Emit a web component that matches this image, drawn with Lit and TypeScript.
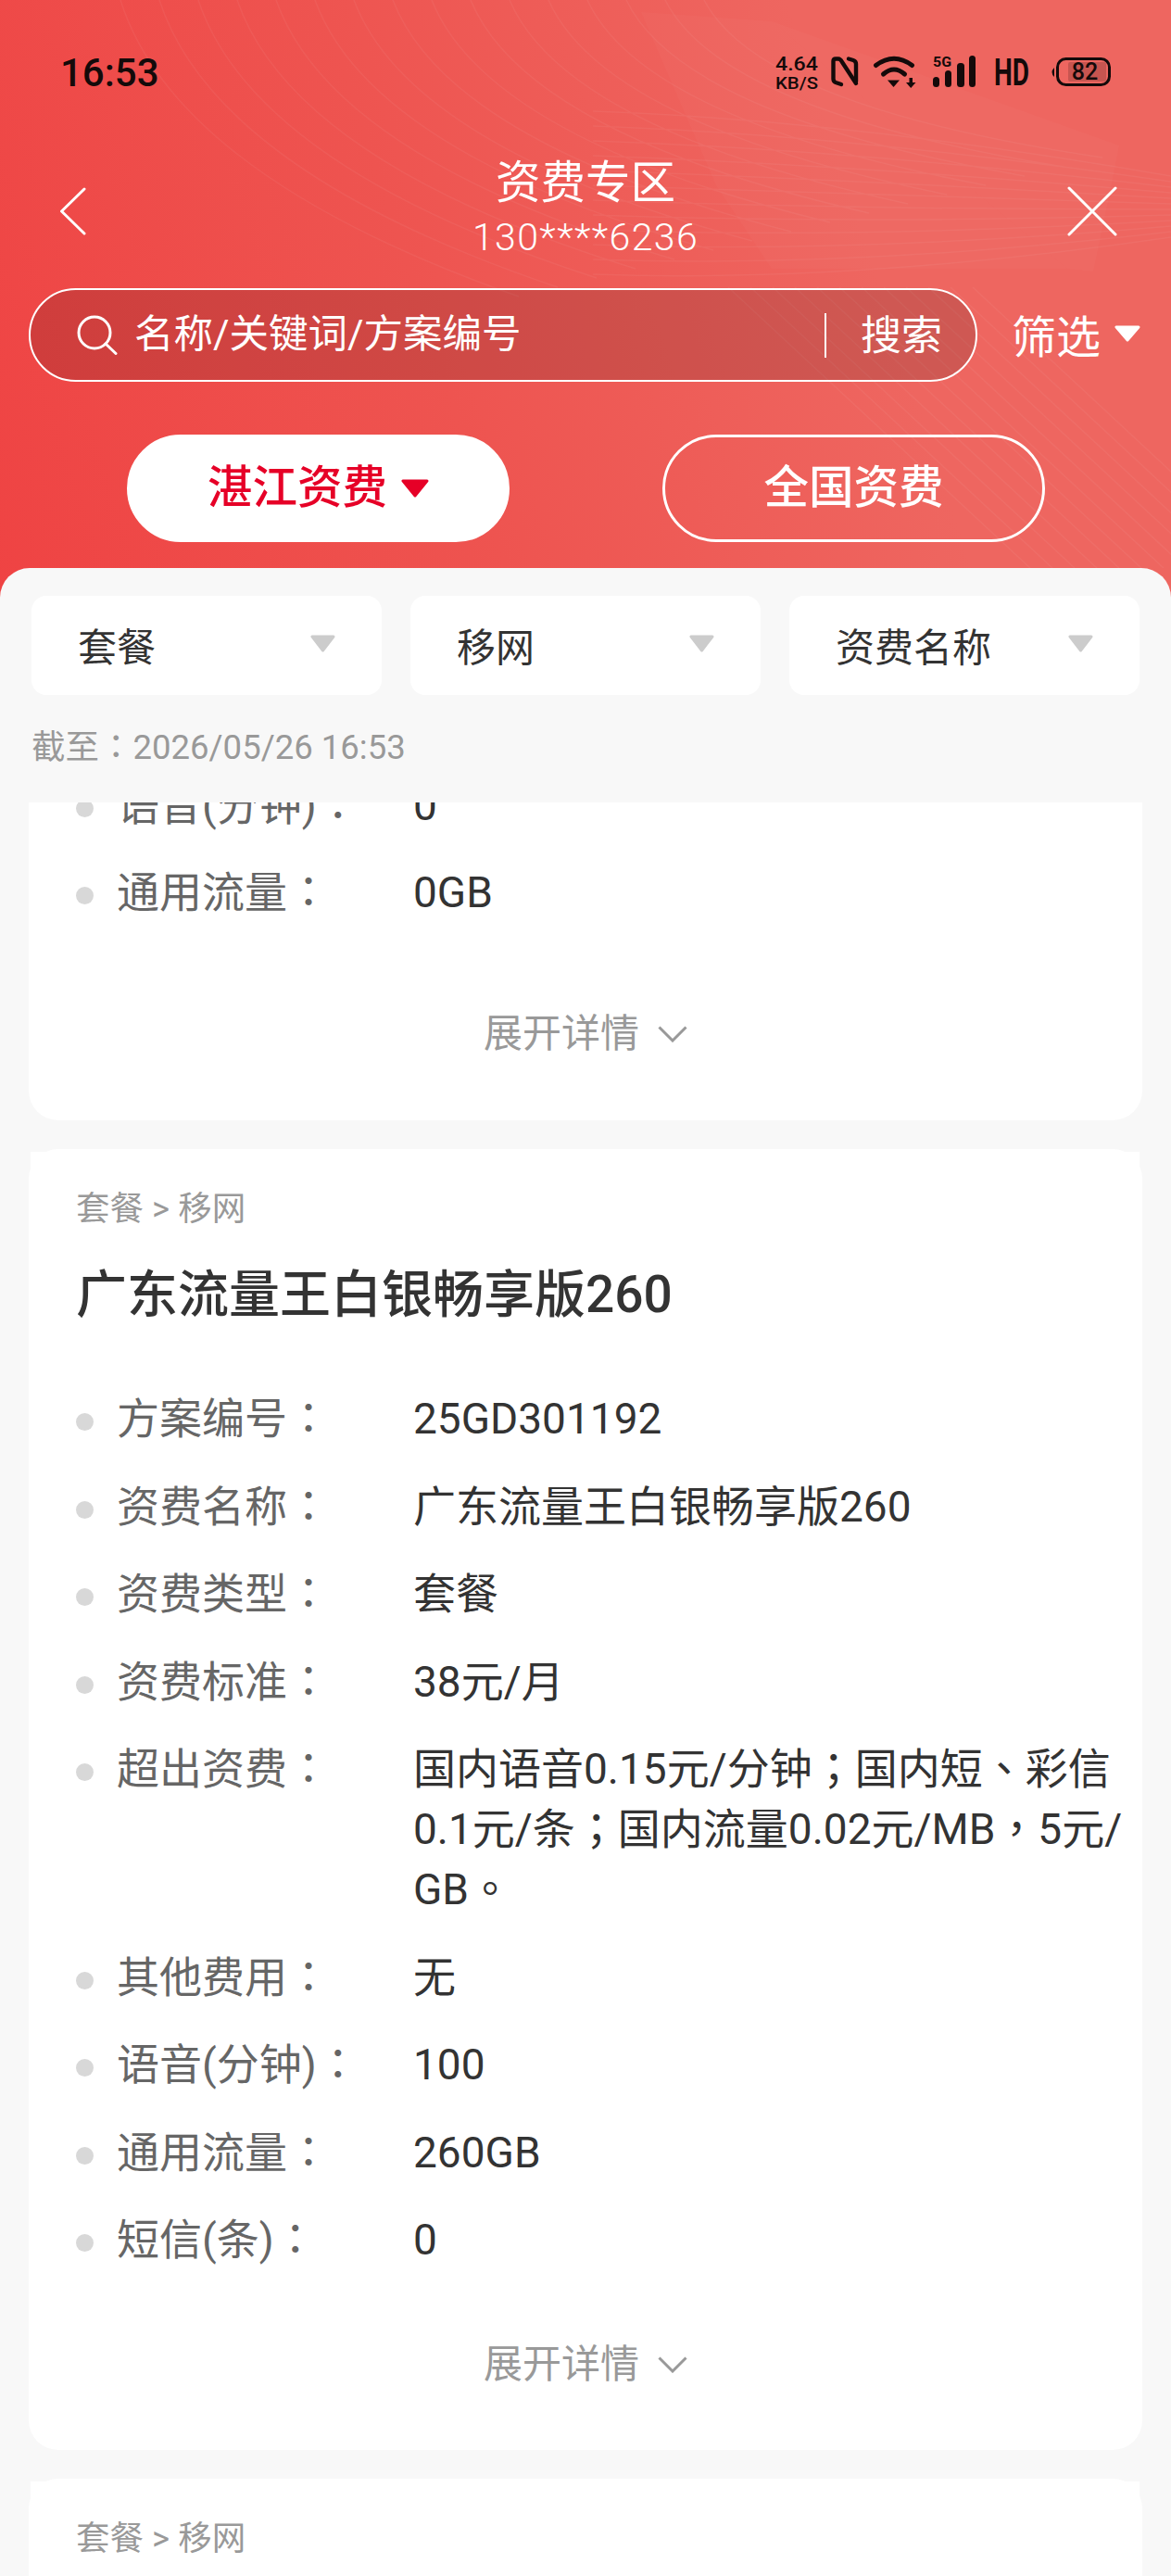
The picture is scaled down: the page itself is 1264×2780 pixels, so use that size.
import { LitElement, css, html, svg } from "lit";
import { customElement } from "lit/decorators.js";

type Row = [string, string];

const PLAN_ROWS: Row[] = [
  ["方案编号：", "25GD301192"],
  ["资费名称：", "广东流量王白银畅享版260"],
  ["资费类型：", "套餐"],
  ["资费标准：", "38元/月"],
  ["超出资费：", "国内语音0.15元/分钟；国内短、彩信0.1元/条；国内流量0.02元/MB，5元/\u200bGB。"],
  ["其他费用：", "无"],
  ["语音(分钟)：", "100"],
  ["通用流量：", "260GB"],
  ["短信(条)：", "0"],
];

const TAIL_ROWS: Row[] = [
  ["语音(分钟)：", "0"],
  ["通用流量：", "0GB"],
];

// full-width punctuation sits centred in its cell on the device, like the TC font
const punct = (text: string) =>
  text.split(/([：；，。、])/).map((part, i) => (i % 2 ? html`<span class="punct">${part}</span>` : part));

const texture = () => {
  const lines: string[] = [];
  for (let i = 0; i < 16; i++) {
    const x = 130 + i * 42;
    lines.push(`M${x} 0 Q${x + 60} ${190 - i * 5} ${x + 430} ${320 - i * 10}`);
  }
  for (let i = 0; i < 12; i++) {
    const y = 120 + i * 16;
    lines.push(`M640 ${y} Q920 ${y + 10} 1264 ${y + 70 - i * 10}`);
  }
  for (let i = 0; i < 12; i++) {
    const x = 906 + i * 24;
    lines.push(`M${x - 120} ${310} L${x + 206} 613`);
  }
  return svg`
    <path d="M692 13 L773 200 L833 290 L1152 290 L833 23 Z" fill="#fff" opacity="0.025"></path>
    <path d="M833 23 L1208 157 L1196 217 L1180 293 L1152 290 Z" fill="#fff" opacity="0.025"></path>
    <path d=${lines.join(" ")} fill="none" stroke="#fff" stroke-width="1.5" opacity="0.05"></path>
  `;
};

@customElement("app-root")
class AppRoot extends LitElement {
  static styles = css`
  :host {
    display: block;
    width: 1264px;
    height: 2780px;
    overflow: hidden;
    font-family: Roboto, "Noto Sans CJK SC", sans-serif;
  }
  .page {
    position: relative;
    display: flex;
    flex-direction: column;
    height: 2780px;
    background: linear-gradient(72deg, #ef4343 0%, #ee5450 38%, #ee6660 72%) no-repeat;
    background-size: 100% 660px;
  }
  .texture {
    position: absolute;
    left: 0;
    top: 0;
    pointer-events: none;
  }
  .status {
    position: relative;
    height: 156px;
    display: flex;
    align-items: center;
    padding: 0 57px 0 65px;
    color: #140a0a;
  }
  .clock {
    flex: 1;
    font-size: 42px;
    font-weight: 500;
  }
  .status-icons {
    display: block;
  }
  .nav {
    position: relative;
    height: 120px;
    display: grid;
    grid-template-columns: 1fr auto 1fr;
    padding: 0 61px;
    color: #fff;
    text-align: center;
  }
  .nav-icon {
    display: block;
    margin: 46px 0 0 3px;
  }
  .nav-icon.close {
    justify-self: end;
    margin: 45px -3px 0 0;
  }
  .title {
    font-size: 48.500px;
    line-height: 80px;
    padding-top: 2px;
  }
  .subtitle {
    margin-top: -2px;
    font-size: 41px;
    font-weight: 300;
    letter-spacing: 1.400px;
    line-height: 40px;
  }
  .search-row {
    position: relative;
    display: flex;
    align-items: center;
    margin: 35px 0 0 31px;
    color: #fff;
  }
  .search {
    box-sizing: border-box;
    width: 1024px;
    height: 101px;
    display: flex;
    align-items: center;
    padding-left: 50px;
    border: 2px solid #fff;
    border-radius: 51px;
    background: rgba(0, 0, 0, 0.13);
  }
  .placeholder {
    flex: 1;
    margin: -2px 0 0 18px;
    font-size: 42.500px;
    line-height: 50px;
  }
  .divider {
    width: 2px;
    height: 48px;
    margin-right: 1px;
    background: #fff;
  }
  .search-btn {
    width: 160px;
    margin-top: 3px;
    text-align: center;
    font-size: 44px;
    line-height: 50px;
  }
  .filter {
    display: flex;
    align-items: center;
    margin-left: 37px;
    padding-top: 6px;
    font-size: 48px;
    line-height: 60px;
  }
  .filter svg {
    margin: 0 0 10px 15px;
  }
  .tabs {
    position: relative;
    display: flex;
    gap: 165px;
    margin: 57px 0 28px 137px;
  }
  .tab {
    box-sizing: border-box;
    width: 413px;
    height: 116px;
    display: flex;
    align-items: center;
    justify-content: center;
    gap: 15px;
    padding-bottom: 1px;
    border: 3px solid #fff;
    border-radius: 58px;
    color: #fff;
    font-size: 48.500px;
    font-weight: 500;
    line-height: 60px;
  }
  .tab svg {
    margin-top: 1px;
  }
  .tab.active {
    background: #fff;
    color: #e60027;
  }
  .panel {
    position: relative;
    flex: 1;
    min-height: 0;
    display: flex;
    flex-direction: column;
    border-radius: 32px 32px 0 0;
    background: #f8f8f8;
  }
  .selects {
    display: grid;
    grid-template-columns: repeat(3, 1fr);
    gap: 31px;
    padding: 30px 34px 0;
  }
  .select {
    box-sizing: border-box;
    height: 107px;
    display: flex;
    align-items: center;
    justify-content: space-between;
    padding: 6px 50px 0 50px;
    border-radius: 16px;
    background: #fff;
    color: #333;
    font-size: 42px;
    line-height: 50px;
  }
  .select svg {
    margin-top: -10px;
  }
  .as-of {
    margin: 32px 0 34px 34px;
    color: #999;
    font-size: 36.500px;
    line-height: 50px;
  }
  .list {
    flex: 1;
    min-height: 0;
    overflow: hidden;
    padding: 0 31px;
  }
  .card {
    position: relative;
    margin-bottom: 31px;
    padding: 40px 8px 67px 51px;
    border-radius: 32px;
    background: #fff;
  }
  /* the app paints a square sheet over the card's top corners */
  .card::before {
    content: "";
    position: absolute;
    left: 2px;
    right: 3px;
    top: 3px;
    height: 40px;
    background: #fff;
  }
  .card > * {
    position: relative;
  }
  .card.tail {
    margin-top: -29.500px;
    padding-top: 0;
    padding-bottom: 68px;
    border-radius: 0 0 32px 32px;
  }
  .card.tail::before {
    display: none;
  }
  .card.last {
    height: 300px;
    margin-bottom: 0;
  }
  .crumb {
    color: #999;
    font-size: 36.500px;
    line-height: 50px;
  }
  .plan {
    margin: 32px 0 67.500px;
    color: #333;
    font-size: 55px;
    font-weight: 500;
    line-height: 70px;
  }
  .row {
    display: flex;
    align-items: flex-start;
    margin-bottom: 29.500px;
    font-size: 46px;
    line-height: 65px;
  }
  .dot {
    flex: none;
    width: 19px;
    height: 19px;
    margin: 26px 25px 0 0;
    border-radius: 50%;
    background: #d8d8d8;
  }
  .label {
    flex: none;
    width: 320px;
    color: #666;
  }
  .value {
    flex: 1;
    min-width: 0;
    color: #333;
  }
  .punct {
    font-family: "Noto Sans CJK TC", sans-serif;
    line-height: 0;
  }
  .expand {
    display: flex;
    align-items: center;
    justify-content: center;
    gap: 20px;
    margin: 76.500px -8px 0 -51px;
    color: #999;
    font-size: 42px;
    line-height: 50px;
  }
  .tail .expand {
    margin-top: 94.500px;
  }
  `;

  private caret(color: string, w: number, h: number) {
    return html`<svg width=${w} height=${h} viewBox="0 0 ${w} ${h}">
      <path d="M2 2 H${w - 2} L${w / 2} ${h - 2} Z" fill=${color} stroke=${color} stroke-width="3" stroke-linejoin="round"></path>
    </svg>`;
  }

  private statusIcons() {
    return html`<svg class="status-icons" width="370" height="40" viewBox="837 58 370 40" fill="#140a0a">
      <text x="860" y="76" font-size="20" font-weight="500" text-anchor="middle" textLength="46" lengthAdjust="spacingAndGlyphs">4.64</text>
      <text x="860" y="96" font-size="19" font-weight="500" text-anchor="middle" textLength="46" lengthAdjust="spacingAndGlyphs">KB/S</text>
      <g transform="translate(897 61)" fill="none" stroke="#140a0a" stroke-width="4.400" stroke-linejoin="round" stroke-linecap="round">
        <path d="M11 30 L5 28 Q2.500 27 2.500 24 V5 Q2.500 2.500 5 2.500 H8 Q10 2.500 12 6 L27 29"></path>
        <path d="M19 2.500 L24 4 Q27 5 27 8 V27"></path>
      </g>
      <g transform="translate(943 61)">
        <path d="M2.500 9.500 Q22 -5 41.500 9.500" fill="none" stroke="#140a0a" stroke-width="5" stroke-linecap="round"></path>
        <path d="M10.500 19 Q22 9 33.500 19" fill="none" stroke="#140a0a" stroke-width="5" stroke-linecap="round"></path>
        <path d="M15 25.500 H28 L21.500 33 Z"></path>
        <path d="M38.500 23 H42 V28 H45.500 L40.200 34 L35 28 H38.500 Z"></path>
      </g>
      <text x="1017" y="72" font-size="14" font-weight="700" text-anchor="middle" textLength="20" lengthAdjust="spacingAndGlyphs">5G</text>
      <rect x="1007" y="83" width="7" height="11" rx="3.500"></rect>
      <rect x="1020" y="76" width="7" height="18" rx="3.500"></rect>
      <rect x="1033" y="68" width="8" height="26" rx="3.500"></rect>
      <rect x="1046" y="60" width="7" height="34" rx="3.500"></rect>
      <text x="1073" y="92" font-size="40" font-weight="700" textLength="38" lengthAdjust="spacingAndGlyphs">HD</text>
      <path d="M1138 73 Q1133 78 1138 83 Z"></path>
      <rect x="1141.500" y="63.500" width="56" height="28" rx="9" fill="none" stroke="#140a0a" stroke-width="3"></rect>
      <rect x="1153" y="67" width="41" height="21" rx="2" fill="#000" opacity="0.16"></rect>
      <text x="1171" y="86" font-size="25" font-weight="500" text-anchor="middle">82</text>
    </svg>`;
  }

  private rows(rows: Row[]) {
    return rows.map(([label, value]) => html`
      <div class="row">
        <span class="dot"></span>
        <span class="label">${punct(label)}</span>
        <span class="value">${punct(value)}</span>
      </div>
    `);
  }

  private expand() {
    return html`<div class="expand">
      <span>展开详情</span>
      <svg width="32" height="18" viewBox="0 0 32 18">
        <path d="M1.500 1.500 L16 16 L30.500 1.500" fill="none" stroke="#999" stroke-width="3"></path>
      </svg>
    </div>`;
  }

  render() {
    return html`
      <div class="page">
        <svg class="texture" width="1264" height="613" viewBox="0 0 1264 613">${texture()}</svg>
        <div class="status">
          <span class="clock">16:53</span>
          ${this.statusIcons()}
        </div>
        <div class="nav">
          <svg class="nav-icon" width="30" height="52" viewBox="0 0 30 52">
            <path d="M27 2 L2.500 26 L27 50" fill="none" stroke="#fff" stroke-width="3" stroke-linecap="round" stroke-linejoin="round"></path>
          </svg>
          <div>
            <div class="title">资费专区</div>
            <div class="subtitle">130****6236</div>
          </div>
          <svg class="nav-icon close" width="54" height="54" viewBox="0 0 54 54">
            <path d="M2 2 L52 52 M52 2 L2 52" fill="none" stroke="#fff" stroke-width="3" stroke-linecap="round"></path>
          </svg>
        </div>
        <div class="search-row">
          <div class="search">
            <svg width="44" height="43" viewBox="0 0 44 43">
              <circle cx="19" cy="19" r="17" fill="none" stroke="#fff" stroke-width="3"></circle>
              <path d="M31 31 L42 41.500" fill="none" stroke="#fff" stroke-width="3" stroke-linecap="round"></path>
            </svg>
            <span class="placeholder">名称/关键词/方案编号</span>
            <span class="divider"></span>
            <span class="search-btn">搜索</span>
          </div>
          <div class="filter">
            <span>筛选</span>
            ${this.caret("#fff", 28, 18)}
          </div>
        </div>
        <div class="tabs">
          <div class="tab active"><span>湛江资费</span>${this.caret("#e60027", 30, 20)}</div>
          <div class="tab">全国资费</div>
        </div>
        <div class="panel">
          <div class="selects">
            <div class="select"><span>套餐</span>${this.caret("#ccc", 27, 19)}</div>
            <div class="select"><span>移网</span>${this.caret("#ccc", 27, 19)}</div>
            <div class="select"><span>资费名称</span>${this.caret("#ccc", 27, 19)}</div>
          </div>
          <div class="as-of">${punct("截至：")}2026/05/26 16:53</div>
          <div class="list">
            <div class="card tail">
              ${this.rows(TAIL_ROWS)}
              ${this.expand()}
            </div>
            <div class="card">
              <div class="crumb">套餐 &gt; 移网</div>
              <div class="plan">广东流量王白银畅享版260</div>
              ${this.rows(PLAN_ROWS)}
              ${this.expand()}
            </div>
            <div class="card last">
              <div class="crumb">套餐 &gt; 移网</div>
            </div>
          </div>
        </div>
      </div>
    `;
  }
}

declare global {
  interface HTMLElementTagNameMap {
    "app-root": AppRoot;
  }
}
